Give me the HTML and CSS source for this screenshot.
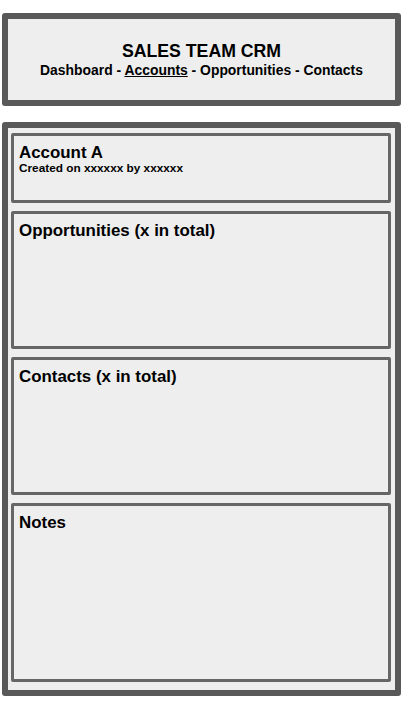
FILE: index.html
```html
<!DOCTYPE html>
<html>
<head>
<meta charset="utf-8">
<link rel="stylesheet" href="styles.css">
</head>
<body>
<div class="page">
  <header class="header">
    <h1 class="title">SALES TEAM CRM</h1>
    <nav class="nav">Dashboard - <a class="nav-link active" href="#">Accounts</a> - Opportunities - Contacts</nav>
  </header>
  <main class="main">
    <section class="card card-account">
      <h2 class="card-title">Account A</h2>
      <p class="card-sub">Created on xxxxxx by xxxxxx</p>
    </section>
    <section class="card card-opps">
      <h2 class="card-title">Opportunities (x in total)</h2>
    </section>
    <section class="card card-contacts">
      <h2 class="card-title">Contacts (x in total)</h2>
    </section>
    <section class="card card-notes">
      <h2 class="card-title">Notes</h2>
    </section>
  </main>
</div>
</body>
</html>
```
FILE: styles.css
```css
html, body {
  margin: 0;
  padding: 0;
  background: #ffffff;
}
body {
  font-family: "Liberation Sans", Arial, sans-serif;
  color: #000;
}
.page {
  padding: 13px 1px 0 2px;
  display: flex;
  flex-direction: column;
  gap: 16px;
}
.header {
  height: 93px;
  box-sizing: border-box;
  border: 6px solid #595959;
  border-radius: 3px;
  background: #eeeeee;
  display: flex;
  flex-direction: column;
  align-items: center;
  justify-content: center;
  gap: 1px;
  padding-top: 1px;
}
.title {
  margin: 0;
  font-size: 17.7px;
  font-weight: bold;
  line-height: 20px;
}
.nav {
  font-size: 13.9px;
  font-weight: bold;
  line-height: 17px;
}
.nav-link {
  color: #000;
  text-decoration: underline;
}
.main {
  height: 574px;
  box-sizing: border-box;
  border: 6px solid #595959;
  border-radius: 3px;
  background: #eeeeee;
  padding: 5px 4px 8px 3px;
  display: flex;
  flex-direction: column;
  gap: 8px;
}
.card {
  box-sizing: border-box;
  border: 3px solid #666666;
  border-radius: 2px;
  background: #eeeeee;
  padding: 7px 5px;
}
.card-account { height: 70px; }
.card-opps { height: 138px; }
.card-contacts { height: 138px; }
.card-notes { flex: 1; }
.card-title {
  margin: 0;
  font-size: 16.9px;
  font-weight: bold;
  line-height: 19px;
}
.card-sub {
  margin: 0;
  font-size: 11.8px;
  font-weight: bold;
  line-height: 13px;
}
```
